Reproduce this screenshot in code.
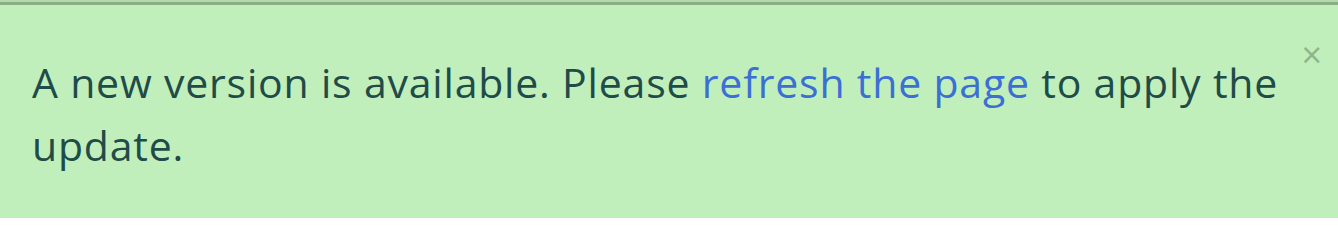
import React from 'react';

const App: React.FC = () => {
  return (
    <div className="w-[1338px] h-[218px] bg-[#c1efbb] overflow-hidden" style={{ fontFamily: '"Open Sans", sans-serif' }}>
      <div className="h-[2px] bg-[#b2d9a9]" />
      <div className="h-[3px] bg-[#8dac86]" />
      <div className="relative pl-[32px] pr-[40px] pt-[46px]">
        <p className="text-[41px] leading-[63px] tracking-[0.8px] text-[#1f4b49]">
          A new version is available. Please{' '}
          <a className="text-[#3b6fd6]">refresh the page</a> to apply the update.
        </p>
        <button className="absolute right-[16px] top-[32px] text-[36px] leading-none text-[#8fb58a]">×</button>
      </div>
    </div>
  );
};

export default App;
